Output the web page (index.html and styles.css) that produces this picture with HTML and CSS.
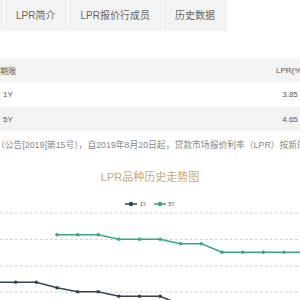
FILE: index.html
```
<!DOCTYPE html>
<html lang="zh-CN">
<head>
<meta charset="UTF-8">
<title>LPR历史数据</title>
<link rel="stylesheet" href="styles.css">
</head>
<body>
<div id="lpr-page">

  <div class="lpr-tabs">
    <span class="lpr-tab lpr-tab-edge"></span>
    <span class="lpr-tab">LPR简介</span>
    <span class="lpr-tab">LPR报价行成员</span>
    <span class="lpr-tab">历史数据</span>
  </div>

  <div class="lpr-table">
    <div class="lpr-row lpr-head">
      <span class="lpr-cell">期限</span>
      <span class="lpr-cell">LPR(%)</span>
    </div>
    <div class="lpr-row">
      <span class="lpr-cell">1Y</span>
      <span class="lpr-cell">3.85</span>
    </div>
    <div class="lpr-row lpr-odd">
      <span class="lpr-cell">5Y</span>
      <span class="lpr-cell">4.65</span>
    </div>
  </div>

  <p class="lpr-note">（公告[2019]第15号），自2019年8月20日起，贷款市场报价利率（LPR）按新的方式形成</p>

  <h2 class="lpr-title">LPR品种历史走势图</h2>

  <!-- history chart -->
  <svg class="lpr-chart" width="300" height="120" viewBox="0 0 300 120">
    <g class="grid">
      <line x1="0" y1="24" x2="300" y2="24"/>
      <line x1="0" y1="50.5" x2="300" y2="50.5"/>
      <line x1="0" y1="77" x2="300" y2="77"/>
      <line x1="0" y1="103" x2="300" y2="103"/>
    </g>

    <g class="legend">
      <line class="s1y" x1="125" y1="15" x2="137" y2="15"/>
      <circle class="d1y" cx="131" cy="15" r="2.2"/>
      <text x="140" y="17">1Y</text>
      <line class="s5y" x1="154" y1="15" x2="166" y2="15"/>
      <circle class="d5y" cx="160" cy="15" r="2.2"/>
      <text x="168.5" y="17">5Y</text>
    </g>

    <polyline class="s5y" points="57,45.7 77.6,45.7 98.2,45.7 118.9,50.3 139.5,50.3 160.1,50.3 180.7,54.7 201.4,54.7 222,63.3 242.6,63.3 263.3,63.3 283.9,63.3 304.5,63.3"/>
    <g class="d5y">
      <circle cx="57" cy="45.7" r="1.8"/>
      <circle cx="77.6" cy="45.7" r="1.8"/>
      <circle cx="98.2" cy="45.7" r="1.8"/>
      <circle cx="118.9" cy="50.3" r="1.8"/>
      <circle cx="139.5" cy="50.3" r="1.8"/>
      <circle cx="160.1" cy="50.3" r="1.8"/>
      <circle cx="180.7" cy="54.7" r="1.8"/>
      <circle cx="201.4" cy="54.7" r="1.8"/>
      <circle cx="222" cy="63.3" r="1.8"/>
      <circle cx="242.6" cy="63.3" r="1.8"/>
      <circle cx="263.3" cy="63.3" r="1.8"/>
      <circle cx="283.9" cy="63.3" r="1.8"/>
    </g>

    <polyline class="s1y" points="-4.9,93.3 15.7,93.3 36.3,93.3 57,98.7 77.6,102.7 98.2,102.7 118.9,107.3 139.5,107.3 160.1,107.3 180.7,115.6 201.4,115.6"/>
    <g class="d1y">
      <circle cx="15.7" cy="93.3" r="1.8"/>
      <circle cx="36.3" cy="93.3" r="1.8"/>
      <circle cx="57" cy="98.7" r="1.8"/>
      <circle cx="77.6" cy="102.7" r="1.8"/>
      <circle cx="98.2" cy="102.7" r="1.8"/>
      <circle cx="118.9" cy="107.3" r="1.8"/>
      <circle cx="139.5" cy="107.3" r="1.8"/>
      <circle cx="160.1" cy="107.3" r="1.8"/>
    </g>
  </svg>

</div>
</body>
</html>
```

FILE: styles.css
```
html, body{
  margin:0;
  padding:0;
  background:#fff;
  overflow:hidden;
}
#lpr-page{
  width:300px;
  height:300px;
  overflow:hidden;
  font-family:"Liberation Sans", "Noto Sans CJK SC", sans-serif;
  color:#555;
}

/* tabs */
div.lpr-tabs{
  display:flex;
  height:31px;
}
span.lpr-tab{
  padding:0 12px;
  line-height:31px;
  font-size:10px;
  color:#666;
  background:#f3f3f3;
  border-left:1px solid #fcfcfc;
  white-space:nowrap;
}
span.lpr-tab-edge{
  width:3px;
  padding:0;
  border-left:none;
}

/* table */
div.lpr-table{
  margin-top:27px;
}
div.lpr-row{
  display:flex;
  justify-content:space-between;
  align-items:center;
  height:25px;
  margin:0 -20px 0 -22px;
  font-size:8px;
  color:#555;
}
div.lpr-head{ height:24px; background:#f3f3f3; }
div.lpr-odd{ height:24px; background:#f3f3f3; }
span.lpr-cell{
  width:60px;
  text-align:center;
  white-space:nowrap;
}

p.lpr-note{
  margin:8px 0 0 -4px;
  font-size:8.8px;
  line-height:12px;
  color:#888;
  white-space:nowrap;
}

h2.lpr-title{
  margin:19px 0 0 0;
  font-size:11px;
  line-height:14px;
  font-weight:normal;
  text-align:center;
  color:#c9a979;
}

/* chart */
svg.lpr-chart{
  display:block;
  margin-top:5px;
}
svg.lpr-chart .grid line{
  stroke:#cfcfcf;
  stroke-width:1;
  stroke-dasharray:2.5 2.5;
}
svg.lpr-chart .legend text{
  font-size:5px;
  fill:#444;
}
svg.lpr-chart .s1y{
  fill:none;
  stroke:#2f4554;
  stroke-width:1.5;
}
svg.lpr-chart .s5y{
  fill:none;
  stroke:#37a882;
  stroke-width:1.5;
}
svg.lpr-chart .d1y{ fill:#2f4554; }
svg.lpr-chart .d5y{ fill:#37a882; }
```
